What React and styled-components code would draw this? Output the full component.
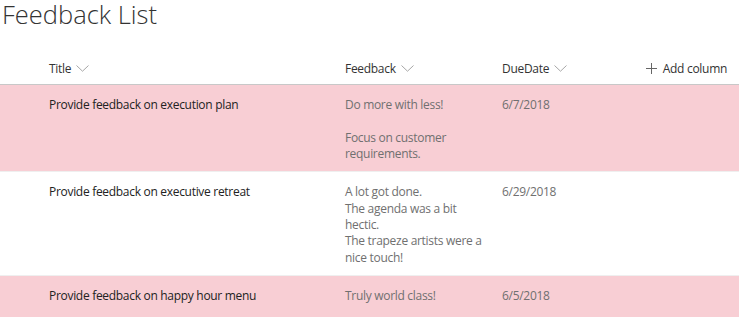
import React from "react";
import styled, { createGlobalStyle } from "styled-components";

const Global = createGlobalStyle`
  html, body { margin: 0; padding: 0; background: #fff; }
  body { font-family: "Open Sans", "Noto Sans", sans-serif; color: #333; }
  *, *::before, *::after { box-sizing: border-box; }
`;

const Page = styled.div`
  width: 739px;
  overflow: hidden;
`;

const PageTitle = styled.h1`
  margin: 0;
  padding: 0 0 0 2px;
  height: 52px;
  font-size: 25.5px;
  font-weight: 300;
  line-height: 28px;
  color: #333;
`;

const HeaderRow = styled.div`
  display: grid;
  grid-template-columns: 296px 157px 1fr auto;
  align-items: center;
  height: 33px;
  padding: 0 12px 0 49px;
  border-bottom: 1px solid #c8c8c8;
  font-size: 12px;
  letter-spacing: -0.3px;
`;

const HeaderCell = styled.div`
  display: flex;
  align-items: center;
  gap: 5px;
  color: #333;
`;

const AddColumn = styled.div`
  display: flex;
  align-items: center;
  gap: 6px;
  color: #333;
`;

const Row = styled.div`
  display: grid;
  grid-template-columns: 296px 157px 1fr;
  min-height: 46px;
  padding: 12px 12px 9px 49px;
  background: ${(p) => (p.$highlight ? "#f8ced4" : "#fff")};
  border-bottom: 1px solid #efefef;
  font-size: 12px;
  line-height: 16.33px;
  letter-spacing: -0.3px;
`;

const TitleCell = styled.div`
  color: #222;
`;

const FieldCell = styled.div`
  color: #707070;
  padding-right: 12px;
`;

const Para = styled.p`
  margin: 0;
`;

const Chevron = () => (
  <svg width="13" height="7" viewBox="0 0 13 7" fill="none">
    <path d="M0.5 0.5 L6.5 6.2 L12.5 0.5" stroke="#a6a6a6" strokeWidth="1" />
  </svg>
);

const Plus = () => (
  <svg width="11" height="11" viewBox="0 0 11 11" fill="none">
    <path d="M5.5 0 V11 M0 5.5 H11" stroke="#666" strokeWidth="1" />
  </svg>
);

const items = [
  {
    title: "Provide feedback on execution plan",
    feedback: ["Do more with less!", "", "Focus on customer requirements."],
    due: "6/7/2018",
    highlight: true,
  },
  {
    title: "Provide feedback on executive retreat",
    feedback: ["A lot got done.", "The agenda was a bit hectic.", "The trapeze artists were a nice touch!"],
    due: "6/29/2018",
    highlight: false,
  },
  {
    title: "Provide feedback on happy hour menu",
    feedback: ["Truly world class!"],
    due: "6/5/2018",
    highlight: true,
  },
];

export default function App() {
  return (
    <Page>
      <Global />
      <PageTitle>Feedback List</PageTitle>
      <HeaderRow>
        <HeaderCell>Title <Chevron /></HeaderCell>
        <HeaderCell>Feedback <Chevron /></HeaderCell>
        <HeaderCell>DueDate <Chevron /></HeaderCell>
        <AddColumn><Plus /> Add column</AddColumn>
      </HeaderRow>
      {items.map((it) => (
        <Row key={it.title} $highlight={it.highlight}>
          <TitleCell>{it.title}</TitleCell>
          <FieldCell>
            {it.feedback.map((p, i) => (
              <Para key={i}>{p || "\u00a0"}</Para>
            ))}
          </FieldCell>
          <FieldCell>{it.due}</FieldCell>
        </Row>
      ))}
    </Page>
  );
}
